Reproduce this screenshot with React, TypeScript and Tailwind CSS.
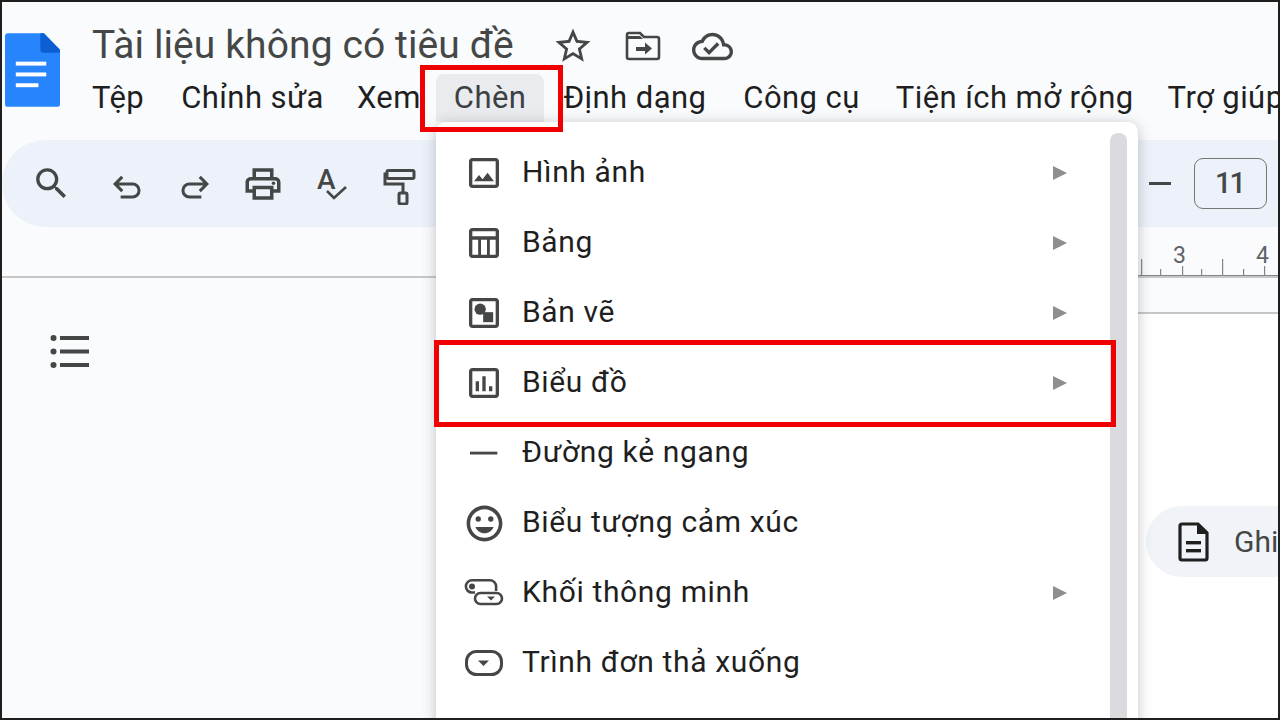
const font = "font-['Roboto',sans-serif]";

const menuItems = [
  { label: 'Hình ảnh', icon: <ImageIcon />, arrow: true },
  { label: 'Bảng', icon: <TableIcon />, arrow: true },
  { label: 'Bản vẽ', icon: <DrawingIcon />, arrow: true },
  { label: 'Biểu đồ', icon: <ChartIcon />, arrow: true },
  { label: 'Đường kẻ ngang', icon: <LineIcon />, arrow: false },
  { label: 'Biểu tượng cảm xúc', icon: <EmojiIcon />, arrow: false },
  { label: 'Khối thông minh', icon: <ChipIcon />, arrow: true },
  { label: 'Trình đơn thả xuống', icon: <DropdownIcon />, arrow: false },
];

const menuBar = [
  { label: 'Tệp', className: '' },
  { label: 'Chỉnh sửa', className: 'ml-[1px]' },
  { label: 'Xem', className: 'ml-[-3px]' },
  { label: 'Chèn', className: 'ml-[-21px] mr-[-18px] flex h-[48px] items-center rounded-t-[8px] bg-[#e9ebee] px-[18px] text-[#3c4043]' },
  { label: 'Định dạng', className: 'ml-[1px]' },
  { label: 'Công cụ', className: 'ml-[1px]' },
  { label: 'Tiện ích mở rộng', className: '' },
  { label: 'Trợ giúp', className: 'ml-[-2px]' },
];

function Svg({ size = 40, children }: { size?: number; children: React.ReactNode }) {
  return (
    <svg width={size} height={size} viewBox="0 0 24 24" fill="#444746" className="shrink-0">
      {children}
    </svg>
  );
}

function ImageIcon() {
  return (
    <Svg>
      <path d="M19 5v14H5V5h14m0-2H5c-1.100 0-2 .9-2 2v14c0 1.100.9 2 2 2h14c1.100 0 2-.9 2-2V5c0-1.100-.9-2-2-2zm-4.860 8.860l-3 3.870L9 13.140 6 17h12l-3.860-5.140z" />
    </Svg>
  );
}

function TableIcon() {
  return (
    <Svg>
      <path d="M19 3H5c-1.100 0-2 .9-2 2v14c0 1.100.9 2 2 2h14c1.100 0 2-.9 2-2V5c0-1.100-.9-2-2-2zm0 2v3H5V5h14zM5 19v-9h3.500v9H5zm5.200 0v-9h3.600v9h-3.600zm5.300 0v-9H19v9h-3.500z" />
    </Svg>
  );
}

function DrawingIcon() {
  return (
    <Svg>
      <path d="M19 3H5c-1.100 0-2 .9-2 2v14c0 1.100.9 2 2 2h14c1.100 0 2-.9 2-2V5c0-1.100-.9-2-2-2zm0 16H5V5h14v14z" />
      <circle cx="9.700" cy="9.700" r="3.400" />
      <rect x="11.500" y="11.500" width="6" height="6" />
    </Svg>
  );
}

function ChartIcon() {
  return (
    <Svg>
      <path d="M19 3H5c-1.100 0-2 .9-2 2v14c0 1.100.9 2 2 2h14c1.100 0 2-.9 2-2V5c0-1.100-.9-2-2-2zm0 16H5V5h14v14z" />
      <path d="M9 17H7v-6h2v6zm4 0h-2V8h2v9zm4 0h-2v-3h2v3z" />
    </Svg>
  );
}

function LineIcon() {
  return (
    <Svg>
      <rect x="3.600" y="11.200" width="16.400" height="1.700" />
    </Svg>
  );
}

function EmojiIcon() {
  return (
    <Svg size={43}>
      <path d="M11.990 2C6.470 2 2 6.480 2 12s4.470 10 9.990 10C17.520 22 22 17.520 22 12S17.520 2 11.990 2zM12 20c-4.420 0-8-3.580-8-8s3.580-8 8-8 8 3.580 8 8-3.580 8-8 8z" />
      <circle cx="8.500" cy="9.500" r="1.500" />
      <circle cx="15.500" cy="9.500" r="1.500" />
      <path d="M12 17.500c2.330 0 4.300-1.460 5.110-3.500H6.890c.8 2.040 2.780 3.500 5.110 3.500z" />
    </Svg>
  );
}

function ChipIcon() {
  return (
    <svg width="40" height="30" viewBox="0 0 40 30" fill="none" className="shrink-0">
      <path d="M11 14.500H8a6.100 6.100 0 0 1 0-12.200H26a6.100 6.100 0 0 1 6.100 6.100V13" stroke="#444746" strokeWidth="2.600" />
      <circle cx="8" cy="8.400" r="3" fill="#444746" />
      <rect x="11" y="15" width="27" height="11" rx="5.500" stroke="#444746" strokeWidth="2.600" />
      <path d="M23 18.500h8l-4 4z" fill="#444746" />
    </svg>
  );
}

function DropdownIcon() {
  return (
    <svg width="40" height="28" viewBox="0 0 40 28" fill="none" className="shrink-0">
      <rect x="2.500" y="2.500" width="35" height="23" rx="10" stroke="#444746" strokeWidth="3" />
      <path d="M14 11.500h11l-5.500 5.500z" fill="#444746" />
    </svg>
  );
}

function DocsLogo() {
  return (
    <svg width="55" height="74" viewBox="0 0 56 75" className="mt-[9px] shrink-0">
      <path d="M3 0h37l16 17v55a3 3 0 0 1-3 3H3a3 3 0 0 1-3-3V3a3 3 0 0 1 3-3z" fill="#2684fc" />
      <path d="M36 0h3l17 17v3H39a3 3 0 0 1-3-3z" fill="#0b5fd3" />
      <rect x="11" y="29" width="31" height="4" fill="#fff" />
      <rect x="11" y="40" width="31" height="4" fill="#fff" />
      <rect x="11" y="51" width="23" height="4" fill="#fff" />
    </svg>
  );
}

function Tool({ children, className = '' }: { children: React.ReactNode; className?: string }) {
  return <div className={`flex h-full w-[68px] items-center justify-center ${className}`}>{children}</div>;
}

function Toolbar() {
  const stroke = { fill: 'none', stroke: '#444746', strokeWidth: 1.9 };
  return (
    <div className="mt-[18px] flex h-[87px] items-center justify-between rounded-l-[44px] bg-[#edf2fa] pl-[15px] pr-[11px]">
      <div className="flex h-full items-center">
        <Tool className="mr-[8px]">
          <svg width="41" height="41" viewBox="0 0 24 24" fill="#444746">
            <path d="M15.500 14h-.79l-.28-.27C15.410 12.590 16 11.110 16 9.500 16 5.910 13.090 3 9.500 3S3 5.910 3 9.500 5.910 16 9.500 16c1.610 0 3.090-.59 4.230-1.570l.27.28v.79l5 4.990L20.490 19l-4.990-5zm-6 0C7.010 14 5 11.990 5 9.500S7.010 5 9.500 5 14 7.010 14 9.500 11.990 14 9.500 14z" />
          </svg>
        </Tool>
        <Tool>
          <svg width="38" height="38" viewBox="0 0 24 24" {...stroke}>
            <path d="M9 7.500 4.500 12 9 16.500M4.500 12H15.500a4.100 4.100 0 0 1 0 8.200H8" />
          </svg>
        </Tool>
        <Tool>
          <svg width="38" height="38" viewBox="0 0 24 24" {...stroke}>
            <path d="M15 7.500 19.500 12 15 16.500M19.500 12H8.500a4.100 4.100 0 0 0 0 8.200H16" />
          </svg>
        </Tool>
        <Tool>
          <svg width="42" height="42" viewBox="0 0 24 24" fill="#444746">
            <path d="M19 8h-1V3H6v5H5c-1.660 0-3 1.340-3 3v6h4v4h12v-4h4v-6c0-1.660-1.340-3-3-3zM8 5h8v3H8V5zm8 12v2H8v-4h8v2zm2-2v-2H6v2H4v-4c0-.55.45-1 1-1h14c.55 0 1 .45 1 1v4h-2z" />
            <circle cx="18" cy="11.500" r="1" />
          </svg>
        </Tool>
        <Tool>
          <svg width="38" height="38" viewBox="0 0 38 38" className="overflow-visible">
            <text x="5" y="24" fill="#444746" fontFamily="Roboto, sans-serif" fontSize="28" fontWeight="500">A</text>
            <path d="M15 26l7 7 12-11" fill="none" stroke="#444746" strokeWidth="2.600" />
          </svg>
        </Tool>
        <Tool>
          <svg width="38" height="42" viewBox="0 0 38 42" fill="none" stroke="#444746" strokeWidth="3">
            <path d="M7 11H5V21H23V30" />
            <rect x="7" y="7.500" width="27" height="8" rx="1.500" />
            <rect x="19" y="30" width="8" height="11" rx="1.500" />
          </svg>
        </Tool>
      </div>
      <div className="flex items-center gap-[23px]">
        <div className="h-[3px] w-[22px] bg-[#444746]" />
        <div className="flex h-[51px] w-[73px] items-center justify-center rounded-[9px] border-[1.5px] border-[#747775] pr-[2px] text-[29px] font-medium tracking-[-2px] text-[#444746]">
          11
        </div>
      </div>
    </div>
  );
}

function Ruler() {
  const ticks = [
    [3, 17],
    [22, 7],
    [44, 10],
    [63, 7],
    [84, 17],
    [105, 7],
    [126, 10],
  ];
  return (
    <div className="flex h-[51px] justify-end border-b-2 border-[#c7c7c7]">
      <div className="relative h-full w-[140px]">
        <svg width="140" height="49" viewBox="0 0 140 49" className="block">
          {ticks.map(([x, h]) => (
            <rect key={x} x={x} y={49 - h} width="1.200" height={h} fill="#80868b" />
          ))}
          <rect x="0" y="48" width="140" height="1" fill="#80868b" />
        </svg>
        <span className="absolute left-[35px] top-[13px] text-[23px] leading-[32px] text-[#5f6368]">3</span>
        <span className="absolute left-[118px] top-[13px] text-[23px] leading-[32px] text-[#5f6368]">4</span>
      </div>
    </div>
  );
}

function DocumentArea() {
  return (
    <div className="flex flex-1">
      <div className="flex flex-1 flex-col">
        <div className="h-[36px]" />
        <div className="pl-[47px] pt-[20px]">
          <svg width="42" height="36" viewBox="0 0 42 36" fill="#444746">
            <circle cx="4.500" cy="4" r="3" />
            <circle cx="4.500" cy="17.500" r="3" />
            <circle cx="4.500" cy="31" r="3" />
            <rect x="11" y="2" width="29" height="4" />
            <rect x="11" y="15.500" width="29" height="4" />
            <rect x="11" y="29" width="29" height="4" />
          </svg>
        </div>
      </div>
      <div className="flex w-[278px] flex-col">
        <div className="h-[36px] border-b-2 border-[#c7c7c7]" />
        <div className="flex-1 bg-white pl-[146px] pt-[192px]">
          <div className="flex h-[71px] items-center gap-[22px] rounded-l-[36px] bg-[#f0f4f9] pl-[30px] text-[30px] text-[#444746]">
            <svg width="36" height="42" viewBox="0 0 36 42" fill="none" className="shrink-0">
              <path d="M6 3h16l9 9v25a2 2 0 0 1-2 2H6a2 2 0 0 1-2-2V5a2 2 0 0 1 2-2z" stroke="#1f1f1f" strokeWidth="3.200" />
              <path d="M21 2l11 11H21z" fill="#1f1f1f" />
              <rect x="10" y="20" width="15" height="3.400" fill="#1f1f1f" />
              <rect x="10" y="28" width="15" height="3.400" fill="#1f1f1f" />
            </svg>
            <span className="whitespace-nowrap">Ghi</span>
          </div>
        </div>
      </div>
    </div>
  );
}

function InsertMenu() {
  return (
    <div className="absolute left-[434px] top-[120px] h-[640px] w-[702px] rounded-[10px] bg-white pt-[16px] shadow-[0_2px_14px_rgba(60,64,67,0.3)]">
      <div className="absolute left-[674px] top-[11px] h-[640px] w-[17px] rounded-t-[8px] bg-[#d9dbdf]" />
      {menuItems.map((item) => (
        <div key={item.label} className="flex h-[70px] items-center pl-[28px] pr-[71px] text-[30px] text-[#1f1f1f]">
          <div className="flex w-[40px] shrink-0 items-center justify-center">{item.icon}</div>
          <span className="ml-[18px] flex-1 whitespace-nowrap pb-[3px] tracking-[0.65px]">{item.label}</span>
          {item.arrow && (
            <svg width="14" height="14" viewBox="0 0 14 14" className="shrink-0">
              <path d="M0 0l14 7-14 7z" fill="#8f8f8f" />
            </svg>
          )}
        </div>
      ))}
    </div>
  );
}

export default function App() {
  return (
    <div className={`relative flex h-[720px] w-[1280px] flex-col overflow-hidden border-2 border-[#1f1f1f] bg-[#f9fbfd] ${font}`}>
      <header className="flex items-start pl-[3px] pt-[22px]">
        <DocsLogo />
        <div className="ml-[32px] flex flex-col">
          <div className="flex h-[44px] items-center">
            <span className="whitespace-nowrap pb-[2px] text-[39px] leading-[44px] tracking-[0.1px] text-[#444746]">Tài liệu không có tiêu đề</span>
            <div className="ml-[38px] flex items-center gap-[31px]">
              <svg width="42" height="42" viewBox="0 0 24 24" fill="#444746">
                <path d="M22 9.240l-7.190-.620L12 2 9.190 8.630 2 9.240l5.460 4.730L5.820 21 12 17.270 18.180 21l-1.630-7.030L22 9.240zM12 15.400l-3.760 2.270 1-4.280-3.320-2.880 4.380-.380L12 6.100l1.710 4.040 4.380.380-3.320 2.880 1 4.280L12 15.400z" />
              </svg>
              <svg width="36" height="30" viewBox="0 0 36 30" fill="none">
                <path d="M2 26V4a2 2 0 0 1 2-2h11l4 4h13a2 2 0 0 1 2 2v18a2 2 0 0 1-2 2H4a2 2 0 0 1-2-2z" stroke="#444746" strokeWidth="2.600" />
                <path d="M2 5h13l3 3H2z" fill="#444746" />
                <path d="M11 16h9v-4.500l7 6-7 6V20h-9z" fill="#444746" />
              </svg>
              <svg width="41" height="41" viewBox="0 0 24 24" fill="#444746">
                <path d="M19.350 10.040C18.670 6.590 15.640 4 12 4 9.110 4 6.600 5.640 5.350 8.040 2.340 8.360 0 10.910 0 14c0 3.310 2.690 6 6 6h13c2.760 0 5-2.240 5-5 0-2.640-2.050-4.780-4.650-4.960zM19 18H6c-2.210 0-4-1.790-4-4 0-2.050 1.530-3.760 3.560-3.970l1.070-.110.500-.950C8.080 7.140 9.940 6 12 6c2.620 0 4.880 1.860 5.390 4.430l.300 1.500 1.530.110c1.560.100 2.780 1.410 2.780 2.960 0 1.650-1.350 3-3 3zm-9-3.820l-2.090-2.090L6.500 13.500 10 17l6.010-6.010-1.410-1.410z" />
              </svg>
            </div>
          </div>
          <nav className="mt-[6px] flex h-[48px] items-center gap-[36px] whitespace-nowrap text-[31px] tracking-[0.43px] text-[#1f1f1f]">
            {menuBar.map((m) => (
              <span key={m.label} className={m.className}>
                {m.label}
              </span>
            ))}
          </nav>
        </div>
      </header>
      <Toolbar />
      <Ruler />
      <DocumentArea />

      <InsertMenu />
      <div className="absolute left-[418px] top-[63px] h-[67px] w-[143px] border-[5px] border-[#f00000]" />
      <div className="absolute left-[432px] top-[338px] h-[87px] w-[682px] border-[5px] border-[#f00000]" />
    </div>
  );
}
